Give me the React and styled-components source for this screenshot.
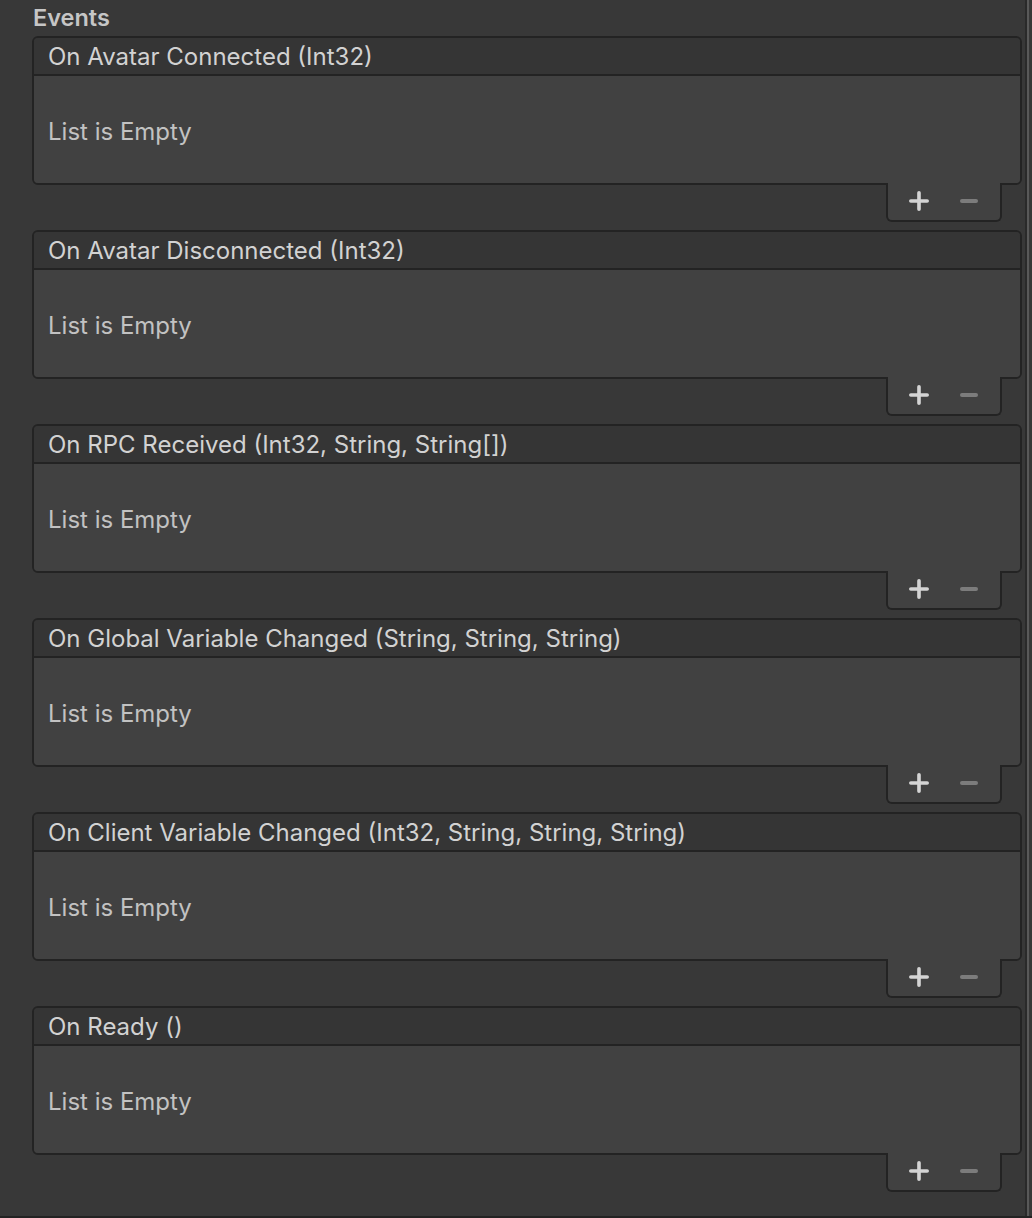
import React from 'react'
import styled, { createGlobalStyle } from 'styled-components'

const GlobalStyle = createGlobalStyle`
  html, body {
    margin: 0;
    padding: 0;
    background: #383838;
  }
  body {
    font-family: Inter, "Noto Sans", "Liberation Sans", sans-serif;
  }
`

const events = [
  'On Avatar Connected (Int32)',
  'On Avatar Disconnected (Int32)',
  'On RPC Received (Int32, String, String[])',
  'On Global Variable Changed (String, String, String)',
  'On Client Variable Changed (Int32, String, String, String)',
  'On Ready ()',
]

const Page = styled.div`
  display: flex;
  width: 1032px;
  height: 1218px;
  box-sizing: border-box;
  background: #383838;
  border-bottom: 2px solid #232323;
  overflow: hidden;
`

const Inspector = styled.div`
  flex: 0 0 1022px;
  display: flex;
  flex-direction: column;
`

const Title = styled.div`
  height: 36px;
  box-sizing: border-box;
  padding: 3px 0 0 33px;
  font-size: 23.5px;
  font-weight: 600;
  line-height: 30px;
  color: #c6c6c6;
`

const List = styled.div`
  display: flex;
  flex-direction: column;
  gap: 8px;
  padding-left: 32px;
`

const EventBlock = styled.div`
  display: flex;
  flex-direction: column;
`

const Card = styled.div`
  border: 2px solid #232323;
  border-radius: 6px;
  overflow: hidden;
`

const Header = styled.div`
  height: 38px;
  box-sizing: border-box;
  background: #353535;
  border-bottom: 2px solid #232323;
  padding: 1px 0 0 14px;
  font-size: 24px;
  line-height: 36px;
  color: #d2d2d2;
  white-space: nowrap;
`

const Body = styled.div`
  height: 107px;
  box-sizing: border-box;
  background: #414141;
  display: flex;
  align-items: center;
  padding: 3px 0 0 14px;
  font-size: 24px;
  color: #c2c2c2;
`

const Footer = styled.div`
  align-self: flex-end;
  margin: -2px 20px 0 0;
  width: 116px;
  height: 39px;
  box-sizing: border-box;
  background: #414141;
  border: 2px solid #232323;
  border-top: none;
  border-radius: 0 0 6px 6px;
  display: flex;
  align-items: center;
  justify-content: center;
  gap: 30px;
  padding-bottom: 1px;
  position: relative;
`

const IconButton = styled.span`
  display: flex;
  width: 20px;
  height: 20px;
  align-items: center;
  justify-content: center;
  color: ${p => (p.$dim ? '#7c7c7c' : '#d4d4d4')};
`

const ScrollEdge = styled.div`
  flex: 1;
  display: flex;
  margin-left: 3px;
  border-left: 2px solid #2a2a2a;
`

const ScrollLine = styled.div`
  width: 2px;
  background: #595959;
`

const Plus = () => (
  <svg width="22" height="22" viewBox="0 0 22 22">
    <path d="M11 2v18M2 11h18" stroke="currentColor" strokeWidth="4" strokeLinecap="round" />
  </svg>
)

const Minus = () => (
  <svg width="18" height="22" viewBox="0 0 18 22">
    <path d="M2 11h14" stroke="currentColor" strokeWidth="4" strokeLinecap="round" />
  </svg>
)

const EventList = ({ name }) => (
  <EventBlock>
    <Card>
      <Header>{name}</Header>
      <Body>List is Empty</Body>
    </Card>
    <Footer>
      <IconButton><Plus /></IconButton>
      <IconButton $dim><Minus /></IconButton>
    </Footer>
  </EventBlock>
)

export default function App() {
  return (
    <>
      <GlobalStyle />
      <Page>
        <Inspector>
          <Title>Events</Title>
          <List>
            {events.map(name => (
              <EventList key={name} name={name} />
            ))}
          </List>
        </Inspector>
        <ScrollEdge>
          <ScrollLine />
        </ScrollEdge>
      </Page>
    </>
  )
}
